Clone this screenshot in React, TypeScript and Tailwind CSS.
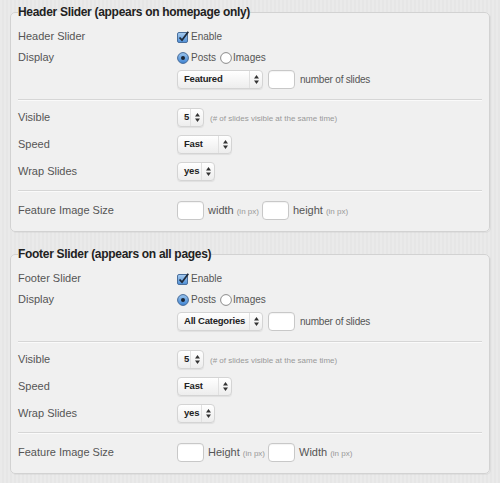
import React from "react";

const font = "font-['Liberation_Sans',Arial,sans-serif]";

function Arrows() {
  return (
    <svg width="5" height="9" viewBox="0 0 5 9" className="block">
      <path d="M2.5 0 L5 3.5 L0 3.5 Z" fill="#333" />
      <path d="M2.5 9 L5 5.5 L0 5.5 Z" fill="#333" />
    </svg>
  );
}

function Select({ label, width }: { label: string; width: string }) {
  return (
    <div
      className={`flex h-[19px] ${width} items-stretch rounded-[4px] border border-[#d4d4d4] bg-gradient-to-b from-white to-[#ededed] shadow-[0_1px_1px_rgba(0,0,0,0.07)]`}
    >
      <span className="flex flex-1 items-center whitespace-nowrap pl-[6px] text-[9.5px] font-bold tracking-[-0.2px] text-[#222]">
        {label}
      </span>
      <span className="flex w-[13px] items-center justify-center border-l border-[#e0e0e0]">
        <Arrows />
      </span>
    </div>
  );
}

function TextBox() {
  return (
    <div className="h-[19px] w-[27px] rounded-[4px] border border-[#c8c8c8] bg-white shadow-[inset_0_1px_1px_rgba(0,0,0,0.05)]" />
  );
}

function Checkbox() {
  return (
    <svg width="12" height="12" viewBox="0 0 12 12" className="block">
      <defs>
        <linearGradient id="cb" x1="0" y1="0" x2="0" y2="1">
          <stop offset="0" stopColor="#a9cdf0" />
          <stop offset="1" stopColor="#4f8fd6" />
        </linearGradient>
      </defs>
      <rect x="0.5" y="1.5" width="10" height="10" rx="1.5" fill="url(#cb)" stroke="#4a6f9c" />
      <path d="M2.5 6.5 L5 9.2 L11.3 0.8" fill="none" stroke="#1f2a3a" strokeWidth="1.8" />
    </svg>
  );
}

function Radio({ on }: { on?: boolean }) {
  return (
    <svg width="12" height="12" viewBox="0 0 12 12" className="block">
      <defs>
        <linearGradient id="rb" x1="0" y1="0" x2="0" y2="1">
          <stop offset="0" stopColor="#9cc6ef" />
          <stop offset="1" stopColor="#3f84d3" />
        </linearGradient>
      </defs>
      {on ? (
        <>
          <circle cx="6" cy="6" r="5.4" fill="url(#rb)" stroke="#456a98" />
          <circle cx="6" cy="6" r="2" fill="#1c2533" />
        </>
      ) : (
        <circle cx="6" cy="6" r="5.4" fill="#fff" stroke="#8b8b8b" />
      )}
    </svg>
  );
}

function Row({
  label,
  h,
  children,
}: {
  label?: string;
  h: string;
  children?: React.ReactNode;
}) {
  return (
    <div className={`flex ${h} items-center`}>
      <div className="w-[159px] text-[11px] text-[#555]">{label}</div>
      <div className="flex items-center text-[10px] text-[#555]">{children}</div>
    </div>
  );
}

function Hint({ children }: { children: React.ReactNode }) {
  return <span className="text-[8px] text-[#999]">{children}</span>;
}

function Divider() {
  return <div className="border-t border-[#d6d6d6] border-b border-b-[#fafafa]" />;
}

interface SliderProps {
  legend: string;
  name: string;
  category: string;
  sizes: [string, string];
  className: string;
}

function SliderBox({ legend, name, category, sizes, className }: SliderProps) {
  return (
    <fieldset
      className={`${className} mx-[10px] rounded-[5px] border border-[#d2d2d2] bg-[#f0f0f0] pl-[7px] pr-[7px] pb-[10px] shadow-[1px_1px_0_rgba(0,0,0,0.04)]`}
    >
      <legend className="text-[12px] font-bold leading-[16px] tracking-[-0.3px] text-[#222]">
        {legend}
      </legend>

      <div className="pt-[6px]">
        <Row label={name} h="h-[21px]">
          <Checkbox />
          <span className="ml-[2px]">Enable</span>
        </Row>
        <Row label="Display" h="h-[21px]">
          <Radio on />
          <span className="ml-[2px]">Posts</span>
          <span className="ml-[4px]">
            <Radio />
          </span>
          <span className="ml-[1px]">Images</span>
        </Row>
        <Row h="h-[23px]">
          <Select label={category} width="w-[86px]" />
          <span className="ml-[5px]">
            <TextBox />
          </span>
          <span className="ml-[5px] tracking-[-0.2px]">number of slides</span>
        </Row>
      </div>

      <div className="mt-[8px]">
        <Divider />
      </div>

      <div className="pt-[3px]">
        <Row label="Visible" h="h-[27px]">
          <Select label="5" width="w-[27px]" />
          <span className="ml-[6px]">
            <Hint>(# of slides visible at the same time)</Hint>
          </span>
        </Row>
        <Row label="Speed" h="h-[27px]">
          <Select label="Fast" width="w-[55px]" />
        </Row>
        <Row label="Wrap Slides" h="h-[27px]">
          <Select label="yes" width="w-[38px]" />
        </Row>
      </div>

      <div className="mt-[5px]">
        <Divider />
      </div>

      <div className="pt-[7px]">
        <Row label="Feature Image Size" h="h-[22px]">
          <TextBox />
          <span className="ml-[4px] text-[11px]">{sizes[0]}</span>
          <span className="ml-[3px]">
            <Hint>(in px)</Hint>
          </span>
          <span className="ml-[3px]">
            <TextBox />
          </span>
          <span className="ml-[4px] text-[11px]">{sizes[1]}</span>
          <span className="ml-[3px]">
            <Hint>(in px)</Hint>
          </span>
        </Row>
      </div>
    </fieldset>
  );
}

export default function App() {
  return (
    <div
      className={`${font} h-[483px] w-[500px] overflow-hidden bg-[#e9e9e9] bg-[repeating-linear-gradient(90deg,#eaeaea_0px,#eaeaea_2px,#e6e6e6_2px,#e6e6e6_4px)] pt-[4px]`}
    >
      <SliderBox
        className=""
        legend="Header Slider (appears on homepage only)"
        name="Header Slider"
        category="Featured"
        sizes={["width", "height"]}
      />
      <SliderBox
        className="mt-[14px]"
        legend="Footer Slider (appears on all pages)"
        name="Footer Slider"
        category="All Categories"
        sizes={["Height", "Width"]}
      />
    </div>
  );
}
